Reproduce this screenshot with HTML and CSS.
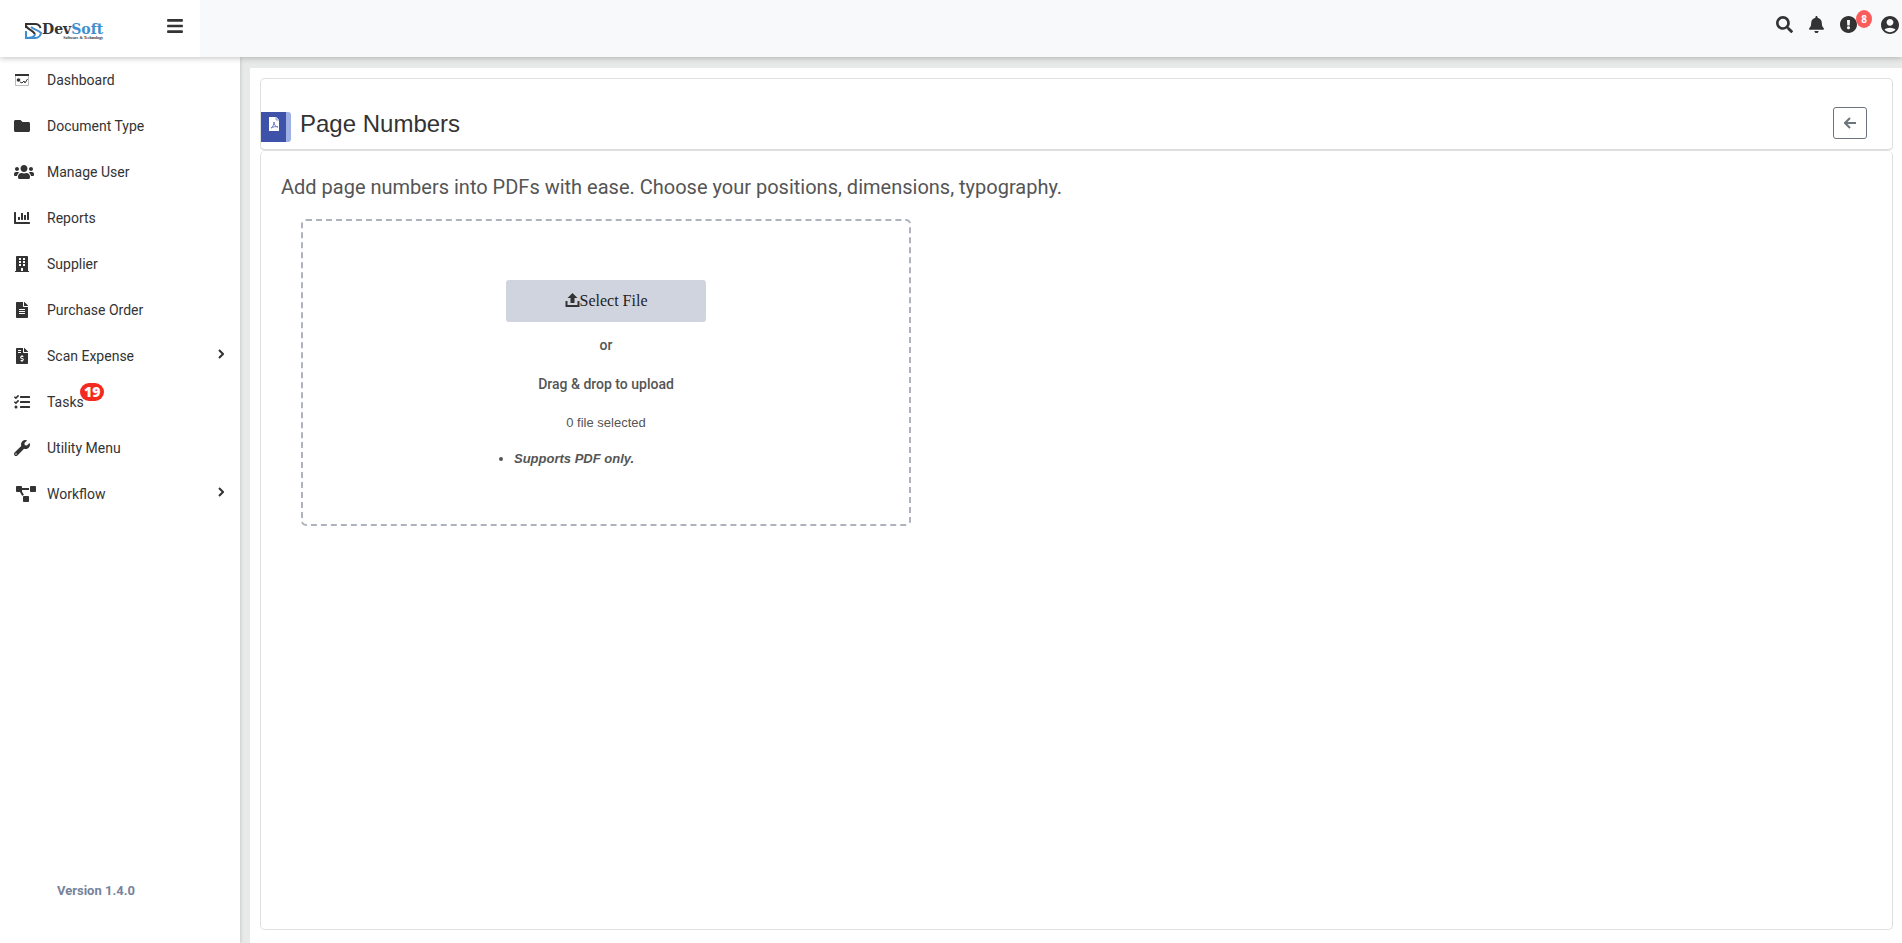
FILE: index.html
```html
<!DOCTYPE html>
<html lang="en">
<head>
    <meta charset="UTF-8">
    <meta name="viewport" content="width=device-width, initial-scale=1.0">
    <title>Page Numbers</title>
    <link rel="stylesheet" href="styles.css">
</head>
<body>

    <header class="topbar">
        <div class="brand">
            <a href="#" class="logo" aria-label="DevSoft">
                <svg class="logo-mark" viewBox="0 0 17 16" fill="none">
                    <path class="dark" d="M1 5V1h9c3 0 5 2 5.5 4M1 3c2 4 6 3 9 8"/>
                    <path class="blue" d="M1 8v7h9c4 0 6-3 6-6M1 15c4 0 9-1 9-4M6 4c3 3 8 3 10 6"/>
                </svg>
                <span class="logo-text">
                    <span class="logo-name">Dev<span class="logo-blue">Soft</span></span>
                    <span class="logo-sub">Software &amp; Technology</span>
                </span>
            </a>
            <button type="button" class="menu-toggle" aria-label="Toggle menu">
                <svg viewBox="0 0 448 512" width="16" height="18"><path d="M16 132h416c8.8 0 16-7.2 16-16V76c0-8.8-7.2-16-16-16H16C7.2 60 0 67.2 0 76v40c0 8.8 7.2 16 16 16zm0 160h416c8.8 0 16-7.2 16-16v-40c0-8.8-7.2-16-16-16H16c-8.8 0-16 7.2-16 16v40c0 8.8 7.2 16 16 16zm0 160h416c8.8 0 16-7.2 16-16v-40c0-8.8-7.2-16-16-16H16c-8.8 0-16 7.2-16 16v40c0 8.8 7.2 16 16 16z"/></svg>
            </button>
        </div>
        <div class="top-actions">
            <button type="button" aria-label="Search">
                <svg viewBox="0 0 512 512" width="17" height="17"><path d="M505 442.7L405.3 343c-4.5-4.5-10.6-7-17-7H372c27.6-35.3 44-79.7 44-128C416 93.1 322.9 0 208 0S0 93.1 0 208s93.1 208 208 208c48.3 0 92.7-16.4 128-44v16.3c0 6.4 2.5 12.5 7 17l99.7 99.7c9.4 9.4 24.6 9.4 33.9 0l28.3-28.3c9.4-9.4 9.4-24.6.1-34zM208 336c-70.7 0-128-57.2-128-128 0-70.7 57.2-128 128-128 70.7 0 128 57.2 128 128 0 70.7-57.2 128-128 128z"/></svg>
            </button>
            <button type="button" aria-label="Notifications">
                <svg viewBox="0 0 448 512" width="15" height="17"><path d="M224 512c35.32 0 63.97-28.65 63.97-64H160.03c0 35.35 28.65 64 63.97 64zm215.39-149.71c-19.32-20.76-55.47-51.99-55.47-154.29 0-77.7-54.48-139.9-127.94-155.16V32c0-17.67-14.32-32-31.98-32s-31.98 14.33-31.98 32v20.84C118.56 68.1 64.08 130.3 64.08 208c0 102.3-36.15 133.53-55.47 154.29-6 6.45-8.66 14.16-8.61 21.71.11 16.4 12.98 32 32.1 32h383.8c19.12 0 32-15.6 32.1-32 .05-7.55-2.61-15.27-8.61-21.71z"/></svg>
            </button>
            <button type="button" class="alerts" aria-label="Alerts">
                <svg viewBox="8 8 496 496" width="17" height="17"><path d="M504 256c0 137-111 248-248 248S8 393 8 256C8 119.1 119 8 256 8s248 111.1 248 248zm-248 50c-25.4 0-46 20.6-46 46s20.6 46 46 46 46-20.6 46-46-20.6-46-46-46zm-43.7-165.3l7.4 136c.4 6.4 5.6 11.3 12 11.3h48.6c6.4 0 11.6-4.9 12-11.3l7.4-136c.4-6.9-5.1-12.7-12-12.7h-63.4c-6.9 0-12.4 5.8-12 12.7z"/></svg>
                <span class="alert-count">8</span>
            </button>
            <button type="button" aria-label="Account">
                <svg viewBox="2 2 20 20" width="18" height="18"><path d="M12 2C6.48 2 2 6.48 2 12s4.48 10 10 10 10-4.48 10-10S17.52 2 12 2zm0 3.2c2.1 0 3.8 1.7 3.8 3.8S14.1 12.8 12 12.8 8.2 11.1 8.2 9 9.9 5.2 12 5.2zM12 20c-2.03 0-4.43-.82-6.14-2.88C7.55 15.8 9.68 15 12 15s4.45.8 6.14 2.12C16.43 19.18 14.03 20 12 20z"/></svg>
            </button>
        </div>
    </header>

    <div class="layout">
        <aside class="sidebar">
            <nav>
                <ul class="menu">
                    <li><a href="#">
                        <svg viewBox="0 0 16 16" width="16" height="16"><path d="M1 2h14v2H1z"/><path d="M1.5 4v9.5h13V4" fill="none" stroke="#bbb"/><circle cx="4.5" cy="8" r="1.8"/><path d="M6 10l2 1 2-2 1 2 2.5-4" fill="none" stroke="#333"/></svg>
                        <span>Dashboard</span></a></li>
                    <li><a href="#">
                        <svg viewBox="0 0 512 512" width="16" height="16"><path d="M464 128H272l-64-64H48C21.49 64 0 85.49 0 112v288c0 26.51 21.49 48 48 48h416c26.51 0 48-21.49 48-48V176c0-26.51-21.49-48-48-48z"/></svg>
                        <span>Document Type</span></a></li>
                    <li><a href="#">
                        <svg viewBox="0 0 640 512" width="20" height="16"><path d="M96 224c35.3 0 64-28.7 64-64s-28.7-64-64-64-64 28.7-64 64 28.7 64 64 64zm448 0c35.3 0 64-28.7 64-64s-28.7-64-64-64-64 28.7-64 64 28.7 64 64 64zm32 32h-64c-17.6 0-33.5 7.1-45.1 18.6 40.3 22.1 68.9 62 75.1 109.4h66c17.7 0 32-14.3 32-32v-32c0-35.3-28.7-64-64-64zm-256 0c61.9 0 112-50.1 112-112S381.9 32 320 32 208 82.1 208 144s50.1 112 112 112zm76.8 32h-8.3c-20.8 10-43.9 16-68.5 16s-47.6-6-68.5-16h-8.3C179.6 288 128 339.6 128 403.2V432c0 26.5 21.5 48 48 48h288c26.5 0 48-21.5 48-48v-28.8c0-63.6-51.6-115.2-115.2-115.2zm-223.7-13.4C161.5 263.1 145.6 256 128 256H64c-35.3 0-64 28.7-64 64v32c0 17.7 14.3 32 32 32h65.9c6.3-47.4 34.9-87.3 75.2-109.4z"/></svg>
                        <span>Manage User</span></a></li>
                    <li><a href="#">
                        <svg viewBox="0 0 512 512" width="16" height="16"><path d="M332.8 320h38.4c6.4 0 12.8-6.4 12.8-12.8V172.8c0-6.4-6.4-12.8-12.8-12.8h-38.4c-6.4 0-12.8 6.4-12.8 12.8v134.4c0 6.4 6.4 12.8 12.8 12.8zm96 0h38.4c6.4 0 12.8-6.4 12.8-12.8V76.8c0-6.4-6.4-12.8-12.8-12.8h-38.4c-6.4 0-12.8 6.4-12.8 12.8v230.4c0 6.4 6.4 12.8 12.8 12.8zm-288 0h38.4c6.4 0 12.8-6.4 12.8-12.8v-70.4c0-6.4-6.4-12.8-12.8-12.8h-38.4c-6.4 0-12.8 6.4-12.8 12.8v70.4c0 6.4 6.4 12.8 12.8 12.8zm96 0h38.4c6.4 0 12.8-6.4 12.8-12.8V108.8c0-6.4-6.4-12.8-12.8-12.8h-38.4c-6.4 0-12.8 6.4-12.8 12.8v198.4c0 6.4 6.4 12.8 12.8 12.8zM496 384H64V80c0-8.84-7.16-16-16-16H16C7.16 64 0 71.16 0 80v336c0 17.67 14.33 32 32 32h464c8.84 0 16-7.16 16-16v-32c0-8.84-7.16-16-16-16z"/></svg>
                        <span>Reports</span></a></li>
                    <li><a href="#">
                        <svg viewBox="0 0 448 512" width="16" height="16"><path fill-rule="evenodd" d="M436 480h-20V24c0-13.3-10.7-24-24-24H56C42.7 0 32 10.7 32 24v456H12c-6.6 0-12 5.4-12 12v20h448v-20c0-6.600-5.4-12-12-12zM128 64h64v64h-64zM256 64h64v64h-64zM128 160h64v64h-64zM256 160h64v64h-64zM128 256h64v64h-64zM256 256h64v64h-64zM192 384h64v96h-64z"/></svg>
                        <span>Supplier</span></a></li>
                    <li><a href="#">
                        <svg viewBox="0 0 384 512" width="16" height="16"><path d="M224 136V0H24C10.7 0 0 10.7 0 24v464c0 13.3 10.7 24 24 24h336c13.3 0 24-10.7 24-24V160H248c-13.2 0-24-10.8-24-24zm64 236c0 6.6-5.4 12-12 12H108c-6.6 0-12-5.4-12-12v-8c0-6.6 5.4-12 12-12h168c6.6 0 12 5.4 12 12v8zm0-64c0 6.6-5.4 12-12 12H108c-6.6 0-12-5.4-12-12v-8c0-6.6 5.4-12 12-12h168c6.6 0 12 5.4 12 12v8zm0-72v8c0 6.6-5.4 12-12 12H108c-6.6 0-12-5.4-12-12v-8c0-6.6 5.4-12 12-12h168c6.6 0 12 5.4 12 12zm96-114.1v6.1H256V0h6.1c6.4 0 12.5 2.5 17 7l97.9 98c4.5 4.5 7 10.6 7 16.9z"/></svg>
                        <span>Purchase Order</span></a></li>
                    <li><a href="#">
                        <svg viewBox="0 0 384 512" width="16" height="16"><path d="M377 105L279.1 7c-4.5-4.5-10.6-7-17-7H256v128h128v-6.1c0-6.3-2.5-12.4-7-16.9zm-153 31V0H24C10.7 0 0 10.7 0 24v464c0 13.3 10.7 24 24 24h336c13.3 0 24-10.7 24-24V160H248c-13.2 0-24-10.8-24-24zM64 72c0-4.42 3.58-8 8-8h80c4.42 0 8 3.58 8 8v16c0 4.42-3.58 8-8 8H72c-4.42 0-8-3.58-8-8V72zm0 80v-16c0-4.42 3.58-8 8-8h80c4.42 0 8 3.58 8 8v16c0 4.42-3.58 8-8 8H72c-4.42 0-8-3.58-8-8zm144 263.88V440c0 4.42-3.58 8-8 8h-16c-4.42 0-8-3.58-8-8v-24.29c-11.29-.58-22.27-4.52-31.37-11.35-3.9-2.93-4.1-8.77-.57-12.14l11.75-11.21c2.77-2.64 6.89-2.76 10.13-.73 3.87 2.42 8.26 3.72 12.82 3.72h28.11c6.5 0 11.8-5.92 11.8-13.19 0-5.95-3.61-11.19-8.77-12.73l-45-13.5c-18.59-5.58-31.58-23.42-31.58-43.39 0-24.52 19.05-44.44 42.67-45.07V232c0-4.42 3.58-8 8-8h16c4.42 0 8 3.58 8 8v24.29c11.29.58 22.27 4.51 31.37 11.35 3.9 2.93 4.1 8.77.57 12.14l-11.75 11.21c-2.77 2.64-6.89 2.76-10.13.73-3.87-2.43-8.26-3.72-12.82-3.72h-28.11c-6.5 0-11.8 5.92-11.8 13.19 0 5.95 3.61 11.19 8.77 12.73l45 13.5c18.59 5.58 31.58 23.42 31.58 43.39 0 24.53-19.05 44.44-42.67 45.07z"/></svg>
                        <span>Scan Expense</span>
                        <svg class="arrow" viewBox="0 0 6 10" width="6" height="10"><path d="M1 1l4 4-4 4"/></svg></a></li>
                    <li><a href="#">
                        <svg viewBox="0 0 512 512" width="16" height="16"><path d="M139.61 35.5a12 12 0 0 0-17 0L58.93 98.81l-22.7-22.12a12 12 0 0 0-17 0L3.53 92.41a12 12 0 0 0 0 17l47.59 47.4a12.78 12.78 0 0 0 17.61 0l15.59-15.62L156.52 69a12.09 12.09 0 0 0 .09-17zm0 159.19a12 12 0 0 0-17 0l-63.68 63.72-22.7-22.1a12 12 0 0 0-17 0L3.53 252a12 12 0 0 0 0 17L51 316.5a12.77 12.77 0 0 0 17.6 0l15.7-15.69 72.2-72.22a12 12 0 0 0 .09-16.9zM64 368c-26.49 0-48.59 21.5-48.59 48S37.53 464 64 464a48 48 0 0 0 0-96zm432 16H208a16 16 0 0 0-16 16v32a16 16 0 0 0 16 16h288a16 16 0 0 0 16-16v-32a16 16 0 0 0-16-16zm0-320H208a16 16 0 0 0-16 16v32a16 16 0 0 0 16 16h288a16 16 0 0 0 16-16V80a16 16 0 0 0-16-16zm0 160H208a16 16 0 0 0-16 16v32a16 16 0 0 0 16 16h288a16 16 0 0 0 16-16v-32a16 16 0 0 0-16-16z"/></svg>
                        <span class="tasks">Tasks<span class="task-count">19</span></span></a></li>
                    <li><a href="#">
                        <svg viewBox="0 0 512 512" width="16" height="16"><path d="M507.73 109.1c-2.24-9.03-13.54-12.09-20.12-5.51l-74.36 74.36-67.88-11.31-11.31-67.88 74.36-74.36c6.62-6.62 3.43-17.9-5.66-20.16-47.38-11.74-99.55.91-136.58 37.93-39.64 39.64-50.55 97.1-34.05 147.2L18.74 402.76c-24.99 24.99-24.99 65.51 0 90.5 24.99 24.99 65.51 24.99 90.5 0l213.21-213.21c50.12 16.71 107.47 5.68 147.37-34.22 37.07-37.07 49.7-89.32 37.91-136.73zM64 472c-13.25 0-24-10.75-24-24 0-13.26 10.75-24 24-24s24 10.74 24 24c0 13.25-10.75 24-24 24z"/></svg>
                        <span>Utility Menu</span></a></li>
                    <li><a href="#">
                        <svg class="wide" viewBox="0 0 640 512" width="20" height="16"><path d="M384 320H256c-17.67 0-32 14.33-32 32v128c0 17.67 14.33 32 32 32h128c17.67 0 32-14.33 32-32V352c0-17.67-14.33-32-32-32zM192 32c0-17.67-14.33-32-32-32H32C14.33 0 0 14.33 0 32v128c0 17.67 14.33 32 32 32h95.72l73.16 128.04C211.98 300.98 232.4 288 256 288h.28L192 175.51V128h224V64H192V32zM608 0H480c-17.67 0-32 14.33-32 32v128c0 17.67 14.33 32 32 32h128c17.67 0 32-14.33 32-32V32c0-17.67-14.33-32-32-32z"/></svg>
                        <span>Workflow</span>
                        <svg class="arrow" viewBox="0 0 6 10" width="6" height="10"><path d="M1 1l4 4-4 4"/></svg></a></li>
                </ul>
            </nav>
            <p class="version">Version 1.4.0</p>
        </aside>

        <main class="content">
            <section class="card">
                <div class="card-header">
                    <span class="page-icon">
                        <svg viewBox="0 0 12 15" width="12" height="15"><path d="M1 0h7l3 3v11H1z" fill="#fff"/><path d="M8 0v3h3" fill="#dde3f5" stroke="#9aa6d0"/><path d="M3 11c2-1 3-4 3-6 0 3 2 5 4 5-2-1-5 0-7 1" fill="none" stroke="#6b7bc0"/></svg>
                    </span>
                    <h1>Page Numbers</h1>
                    <button type="button" class="back" aria-label="Back">
                        <svg viewBox="0 0 12 12" width="12" height="12"><path d="M6 1L1 6l5 5M1 6h11" fill="none" stroke="#6c757d" stroke-width="2"/></svg>
                    </button>
                </div>
                <div class="card-body">
                    <p class="description">Add page numbers into PDFs with ease. Choose your positions, dimensions, typography.</p>
                    <div class="dropzone">
                        <button type="button" class="select-file">
                            <svg viewBox="0 0 14 14" width="15" height="14"><path d="M7 0l5 5H9v5H5V5H2zM0 8h2v4h10V8h2v6H0z"/></svg>Select File
                        </button>
                        <p class="strong">or</p>
                        <p class="strong">Drag &amp; drop to upload</p>
                        <p class="selected">0 file selected</p>
                        <ul class="rules">
                            <li>Supports PDF only.</li>
                        </ul>
                    </div>
                </div>
            </section>
        </main>
    </div>

</body>
</html>
```
FILE: styles.css
```css
* {
    box-sizing: border-box;
}

body {
    margin: 0;
    min-height: 100vh;
    display: flex;
    flex-direction: column;
    font-family: Roboto, sans-serif;
    color: #333;
    background-color: #e8e9e9;
}

p, h1, ul {
    margin: 0;
}

button {
    padding: 0;
    border: none;
    background: none;
    font: inherit;
    cursor: pointer;
}

a {
    color: inherit;
    text-decoration: none;
}

svg {
    display: block;
    flex-shrink: 0;
    fill: #333;
}

/* top bar */
.topbar {
    height: 57px;
    display: flex;
    justify-content: space-between;
    background-color: #f8f9fb;
    box-shadow: 0 1px 6px rgba(0, 0, 0, 0.25);
    z-index: 2;
}

.brand {
    width: 200px;
    padding: 0 17px 0 25px;
    display: flex;
    justify-content: space-between;
    background-color: #fff;
}

.logo {
    display: flex;
    align-items: flex-start;
    padding-top: 23px;
}

.logo-mark {
    width: 17px;
    height: 16px;
    fill: none;
    stroke-width: 2;
}

.logo-mark .dark {
    stroke: #333;
}

.logo-mark .blue {
    stroke: #3f8fd0;
}

.logo-text {
    display: flex;
    flex-direction: column;
    align-items: flex-end;
}

.logo-name {
    font-family: "DejaVu Serif", serif;
    font-size: 14px;
    line-height: 13px;
    font-weight: bold;
}

.logo-blue {
    color: #3f8fd0;
}

.logo-sub {
    font-family: "Liberation Serif", serif;
    font-size: 4px;
    line-height: 4px;
    font-weight: bold;
}

.menu-toggle {
    align-self: flex-start;
    margin-top: 17px;
}

.top-actions {
    display: flex;
    align-items: flex-start;
    gap: 16px;
    padding: 16px 3px 0 0;
}

.alerts {
    position: relative;
    margin-right: 8px;
}

.alert-count {
    position: absolute;
    left: 16px;
    top: -6px;
    width: 16px;
    height: 18px;
    border-radius: 50%;
    background-color: #fa5c5c;
    color: #fff;
    font-family: "Open Sans", sans-serif;
    font-size: 10px;
    line-height: 18px;
    font-weight: bold;
}

/* sidebar */
.layout {
    flex: 1;
    display: flex;
}

.sidebar {
    width: 240px;
    display: flex;
    flex-direction: column;
    justify-content: space-between;
    background-color: #fff;
    box-shadow: 0 0 4px rgba(0, 0, 0, 0.2);
}

.menu {
    padding: 0;
    list-style: none;
    font-size: 14px;
}

.menu a {
    height: 46px;
    padding: 0 16px 0 14px;
    display: grid;
    grid-template-columns: 33px 1fr 6px;
    align-items: center;
}

.menu .wide {
    margin-left: 2px;
}

.menu .arrow {
    margin-bottom: 4px;
    fill: none;
    stroke: #333;
    stroke-width: 2;
}

.tasks {
    position: relative;
    justify-self: start;
}

.task-count {
    position: absolute;
    left: 33px;
    top: -11px;
    padding: 0 4px;
    border-radius: 9px;
    background-color: #f42a20;
    color: #fff;
    font-family: "Open Sans", sans-serif;
    font-size: 14px;
    line-height: 18px;
    font-weight: 800;
}

.version {
    padding: 0 57px 43px;
    color: #75839b;
    font-size: 13px;
    line-height: 18px;
    font-weight: bold;
}

/* content */
.content {
    flex: 1;
    display: flex;
    margin: 11px 0 0 10px;
    padding: 10px 9px 13px 10px;
    background-color: #fff;
}

.card {
    flex: 1;
    display: flex;
    flex-direction: column;
}

.card-header {
    height: 73px;
    padding: 18px 25px 0 0;
    display: flex;
    align-items: center;
    gap: 9px;
    border: 1px solid #dedfe0;
    border-bottom-width: 2px;
    border-radius: 5px;
}

.page-icon {
    width: 30px;
    height: 30px;
    padding: 5px 0 0 7px;
    margin-top: 8px;
    border-right: 5px solid #9fb0e4;
    border-radius: 0 3px 3px 0;
    background-color: #3d52a8;
}

.card-header h1 {
    flex: 1;
    padding-top: 2px;
    font-family: "Liberation Sans", Arial, sans-serif;
    font-size: 24px;
    line-height: 28px;
    font-weight: normal;
}

.back {
    width: 34px;
    height: 32px;
    display: flex;
    align-items: center;
    justify-content: center;
    border: 1px solid #6c757d;
    border-radius: 3px;
}

.card-body {
    flex: 1;
    padding: 24px 20px;
    border: 1px solid #dedfe0;
    border-top: none;
    border-radius: 5px;
    color: #555;
}

.description {
    font-size: 20px;
    line-height: 24px;
}

.dropzone {
    max-width: 610px;
    margin: 20px 0 0 20px;
    padding: 59px 20px 55px;
    display: flex;
    flex-direction: column;
    align-items: center;
    border: 2px dashed #adb2bd;
    border-radius: 5px;
    font-size: 14px;
    line-height: 20px;
}

.select-file {
    width: 200px;
    height: 42px;
    margin-bottom: 13px;
    display: flex;
    align-items: center;
    justify-content: center;
    border-radius: 3px;
    background-color: #d0d4de;
    color: #222;
    font-family: "Liberation Serif", serif;
    font-size: 16px;
}

.select-file svg {
    margin-bottom: 2px;
}

.strong {
    margin-bottom: 19px;
    font-weight: 500;
}

.selected,
.rules {
    font-family: "Liberation Sans", Arial, sans-serif;
    font-size: 13px;
}

.selected {
    margin-bottom: 16px;
}

.rules {
    width: 264px;
    padding-left: 40px;
    font-style: italic;
    font-weight: bold;
}
```
